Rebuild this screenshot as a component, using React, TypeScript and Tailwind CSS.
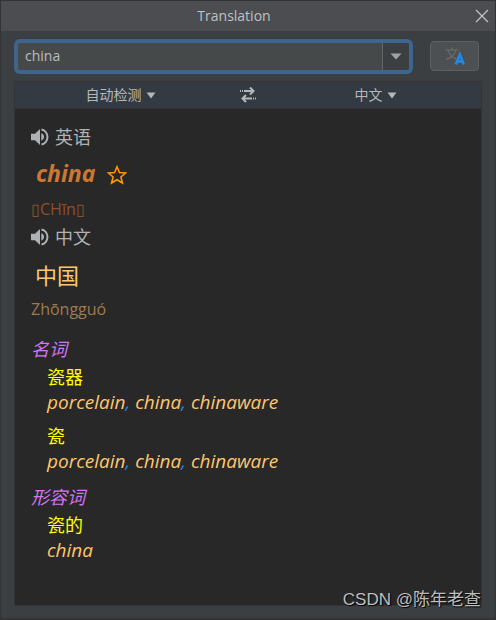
import { useState } from "react";

const LATIN = "font-['Open_Sans','Noto_Sans_CJK_SC',sans-serif]";

type Sense = { word: string; synonyms: string[] };
type Group = { part: string; senses: Sense[] };

const groups: Group[] = [
  {
    part: "名词",
    senses: [
      { word: "瓷器", synonyms: ["porcelain", "china", "chinaware"] },
      { word: "瓷", synonyms: ["porcelain", "china", "chinaware"] },
    ],
  },
  { part: "形容词", senses: [{ word: "瓷的", synonyms: ["china"] }] },
];

function Triangle() {
  return (
    <svg viewBox="0 0 10 7" className="pointer-events-none h-[7px] w-2.5 shrink-0" fill="#b4b6b7" aria-hidden="true">
      <path d="M0.5 0.5h9L5 6.5z" />
    </svg>
  );
}

function LanguageSelect({ label, options }: { label: string; options: string[] }) {
  return (
    <label className="flex flex-1 items-center justify-center">
      <select
        aria-label={label}
        className="field-sizing-content appearance-none bg-transparent pr-1 text-sm leading-5 text-[#b4b8bb] outline-none"
      >
        {options.map((option) => (
          <option key={option}>{option}</option>
        ))}
      </select>
      <Triangle />
    </label>
  );
}

function Spoken({ language }: { language: string }) {
  return (
    <div className="flex h-6 items-center gap-1.5">
      <button type="button" aria-label={`朗读${language}`}>
        <svg viewBox="0 0 18 18" className="block size-[18px]" aria-hidden="true">
          <path d="M0 5.8h4L9 1v16l-5-4.8H0z" fill="#afb1b3" />
          <path d="M10.3 5.2a4 4 0 0 1 0 7.6z" fill="#afb1b3" />
          <path d="M10.5 1.5a7.7 7.7 0 0 1 0 15" fill="none" stroke="#afb1b3" strokeWidth="2" />
        </svg>
      </button>
      <span className="text-lg leading-6 text-[#afb1b3]">{language}</span>
    </div>
  );
}

export default function App() {
  const [query, setQuery] = useState("china");

  return (
    <div className={`relative flex min-h-screen flex-col border border-b-2 border-[#323436] bg-[#3c3f41] ${LATIN}`}>
      <header className="grid h-[30px] grid-cols-[24px_1fr_24px] items-center bg-[#4b4d51]">
        <h1 className="col-start-2 pr-7 text-center text-sm leading-5 text-[#bfc1c3]">Translation</h1>
        <button type="button" aria-label="Close" className="flex">
          <svg viewBox="0 0 14 14" className="ml-1 size-3.5" stroke="#bfc1c3" strokeWidth="1.3" aria-hidden="true">
            <path d="M1 1l12 12M13 1L1 13" />
          </svg>
        </button>
      </header>

      <main className="flex flex-1 flex-col px-[13px] pb-3">
        <form className="flex h-[50px] items-center gap-[17px] pr-[3px]" onSubmit={(e) => e.preventDefault()}>
          <div className="flex h-[35px] flex-1 overflow-hidden rounded-md border-4 border-[#3f658e] bg-[#45494a]">
            <input
              aria-label="Text to translate"
              value={query}
              onChange={(e) => setQuery(e.target.value)}
              className="min-w-0 flex-1 bg-transparent px-[7px] text-sm leading-5 text-[#bbbdbf] outline-none"
            />
            <button
              type="button"
              aria-label="History"
              className="flex w-[27px] items-center justify-center border-l border-[#646769] bg-[#3c3f41]"
            >
              <svg viewBox="0 0 12 7" className="h-[7px] w-3" fill="#a0a3a5" aria-hidden="true">
                <path d="M0.5 0.5h11L6 6.5z" />
              </svg>
            </button>
          </div>
          <button
            type="submit"
            aria-label="Translate"
            className="flex h-[30px] w-[49px] items-center justify-center rounded border border-[#5e6062] bg-[#4c5052]"
          >
            <svg viewBox="0 0 20 20" className="size-5" fill="none" aria-hidden="true">
              <path d="M0.5 4h13M7 1.500V4M3 4c1.400 4.500 4.500 7.500 8 9M11 4c-1.400 4.500-5 8-10 9.500" stroke="#646668" strokeWidth="1.6" />
              <path d="M10.800 18.500L14.800 8.500L18.800 18.500M12.200 15.500h5.200" stroke="#2388e2" strokeWidth="2.600" />
            </svg>
          </button>
        </form>

        <section className="flex flex-1 flex-col border border-[#323436] bg-[#282828]">
          <div className="flex h-[27px] items-center border-b border-[#2f3234] bg-[#343a42]">
            <LanguageSelect label="Source language" options={["自动检测", "英语", "中文"]} />
            <button type="button" aria-label="Swap languages" className="flex w-11 justify-center">
              <svg viewBox="0 0 16 16" className="size-4" fill="none" stroke="#b4b6b7" strokeWidth="2" aria-hidden="true">
                <path d="M0 4h1M2 4h1M4 4h10M10 0.500l3.500 3.500L10 7.500" />
                <path d="M16 11.500h-1M14 11.500h-1M12 11.500H2M6 8L2.500 11.500L6 15" />
              </svg>
            </button>
            <LanguageSelect label="Target language" options={["中文", "英语"]} />
          </div>

          <article className="px-4 pt-4 pb-4">
            <Spoken language="英语" />
            <div className="flex h-12 items-center gap-3 pl-[5px]">
              <span className="text-[23px] leading-8 font-bold text-[#cc7832] italic">china</span>
              <button type="button" aria-label="收藏" className="pt-1">
                <svg viewBox="0 0 20 20" className="block size-5" fill="none" stroke="#ff9800" strokeWidth="1.6" aria-hidden="true">
                  <path d="M10 1.800l2.400 5.700 6.200.500-4.700 4 1.500 6L10 14.800 4.600 18l1.500-6-4.700-4 6.200-.5z" />
                </svg>
              </button>
            </div>
            <p className="h-7 text-base leading-6 text-[#8a512a]">▯CHīn▯</p>

            <Spoken language="中文" />
            <p className="pt-2 pl-1 text-[22px] leading-9 text-[#ffc66d]">中国</p>
            <p className="h-[42px] pt-1 text-base leading-6 text-[#a07b4c]">Zhōngguó</p>

            {groups.map((group) => (
              <section key={group.part} className="mb-2.5">
                <h2 className="pb-0.5 text-lg leading-7 text-[#d474f5] italic">{group.part}</h2>
                <ul className="flex flex-col gap-2.5 pl-4">
                  {group.senses.map((sense) => (
                    <li key={sense.word}>
                      <p className="text-lg leading-[25px] text-[#ffff00]">{sense.word}</p>
                      <p className="text-[19px] leading-6 text-[#ffc66d] italic">
                        {sense.synonyms.map((synonym, i) => (
                          <span key={synonym}>
                            {i > 0 && <span className="text-[#1e88e5]">, </span>}
                            {synonym}
                          </span>
                        ))}
                      </p>
                    </li>
                  ))}
                </ul>
              </section>
            ))}
          </article>
        </section>
      </main>

      <p className="absolute right-3.5 bottom-1.5 font-['Liberation_Sans','Noto_Sans_CJK_SC',sans-serif] text-[17px] leading-6 text-[#bdbdbd] [text-shadow:1px_1px_1px_#000]">
        CSDN @陈年老查
      </p>
    </div>
  );
}
